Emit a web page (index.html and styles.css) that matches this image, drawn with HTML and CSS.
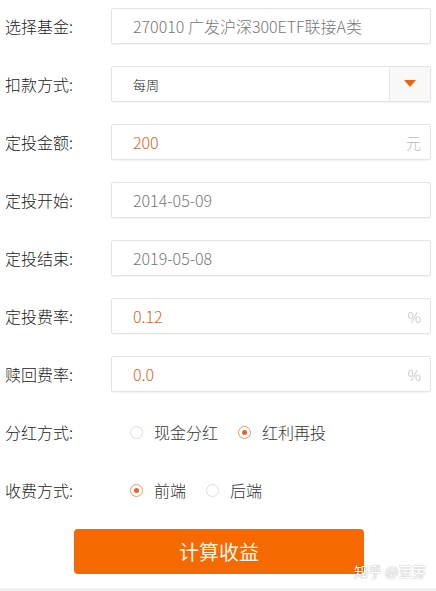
FILE: index.html
```html
<!DOCTYPE html>
<html lang="zh">
<head>
<meta charset="utf-8">
<link rel="stylesheet" href="styles.css">
</head>
<body>
<div class="page">
  <form class="form">
    <div class="row">
      <div class="label">选择基金:</div>
      <div class="box"><span class="val gray">270010 广发沪深300ETF联接A类</span></div>
    </div>
    <div class="row">
      <div class="label">扣款方式:</div>
      <div class="box select">
        <span class="val small">每周</span>
        <span class="caret"><svg width="12" height="8" viewBox="0 0 12 8"><path d="M0 0 H12 L6 7 Z" fill="#ea640f"/></svg></span>
      </div>
    </div>
    <div class="row">
      <div class="label">定投金额:</div>
      <div class="box"><span class="val orange">200</span><span class="unit">元</span></div>
    </div>
    <div class="row">
      <div class="label">定投开始:</div>
      <div class="box"><span class="val gray">2014-05-09</span></div>
    </div>
    <div class="row">
      <div class="label">定投结束:</div>
      <div class="box"><span class="val gray">2019-05-08</span></div>
    </div>
    <div class="row">
      <div class="label">定投费率:</div>
      <div class="box"><span class="val orange">0.12</span><span class="unit">%</span></div>
    </div>
    <div class="row">
      <div class="label">赎回费率:</div>
      <div class="box"><span class="val orange">0.0</span><span class="unit">%</span></div>
    </div>
    <div class="row">
      <div class="label">分红方式:</div>
      <div class="radios">
        <span class="opt"><span class="radio"></span>现金分红</span>
        <span class="opt"><span class="radio on"></span>红利再投</span>
      </div>
    </div>
    <div class="row">
      <div class="label">收费方式:</div>
      <div class="radios">
        <span class="opt"><span class="radio on"></span>前端</span>
        <span class="opt"><span class="radio"></span>后端</span>
      </div>
    </div>
    <div class="actions">
      <button type="button" class="btn">计算收益</button>
    </div>
  </form>
  <div class="watermark">知乎 @豆芽</div>
  <div class="footer"></div>
</div>
</body>
</html>
```

FILE: styles.css
```css
html, body {
  margin: 0;
  padding: 0;
  background: #fff;
}
body {
  font-family: "Noto Sans CJK SC", "Noto Sans", sans-serif;
  font-weight: 300;
  color: #333;
}
.page {
  position: relative;
  width: 436px;
  height: 591px;
  overflow: hidden;
}
.form {
  display: flex;
  flex-direction: column;
  gap: 22px;
  padding-top: 8px;
}
.row {
  display: flex;
  align-items: center;
  height: 36px;
}
.label {
  width: 106px;
  padding-left: 5px;
  font-size: 16px;
  color: #222;
  flex: none;
}
.box {
  box-sizing: border-box;
  width: 320px;
  height: 36px;
  border: 1px solid #e4e4e4;
  border-radius: 2px;
  box-shadow: 0 1px 1px rgba(0,0,0,0.05);
  background: #fff;
  display: flex;
  align-items: center;
  padding-left: 21px;
  padding-right: 9px;
}
.val {
  flex: 1;
  font-size: 16px;
  white-space: nowrap;
}
.gray { color: #777; }
.orange { color: #cc6a2c; }
.small { font-size: 13px; color: #222; }
.unit {
  font-size: 15px;
  color: #bbb;
}
.select {
  padding-right: 0;
}
.caret {
  width: 40px;
  align-self: stretch;
  border-left: 1px solid #e8e8e8;
  background: #f8f8f8;
  display: flex;
  align-items: center;
  justify-content: center;
}
.radios {
  display: flex;
  align-items: center;
  gap: 20px;
  padding-left: 19px;
}
.opt {
  display: flex;
  align-items: center;
  gap: 11px;
  font-size: 16px;
  color: #333;
}
.radio {
  box-sizing: border-box;
  width: 13px;
  height: 13px;
  border: 1px solid #ddd;
  border-radius: 50%;
  display: flex;
  align-items: center;
  justify-content: center;
}
.radio.on {
  border-color: #e89a66;
}
.radio.on::after {
  content: "";
  width: 5px;
  height: 5px;
  border-radius: 50%;
  background: #d9692a;
}
.actions {
  padding-left: 74px;
  margin-top: -1px;
}
.btn {
  width: 290px;
  height: 45px;
  border: none;
  border-radius: 4px;
  background: #f56a00;
  color: #fff6ea;
  font-family: "Noto Sans CJK SC", sans-serif;
  font-weight: 400;
  font-size: 20px;
  padding: 0;
}
.watermark {
  position: absolute;
  left: 354px;
  top: 561px;
  font-size: 14px;
  font-weight: 400;
  color: #fff;
  text-shadow: 0 0 1px rgba(0,0,0,0.35), 0 0 2px rgba(0,0,0,0.2);
  white-space: nowrap;
}
.footer {
  position: absolute;
  left: 0;
  right: 0;
  bottom: 0;
  height: 3px;
  background: #f0f0f0;
}
```
